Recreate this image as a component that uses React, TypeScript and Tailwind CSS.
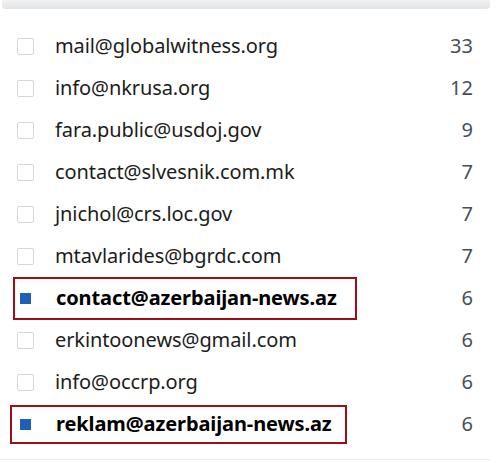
import React from 'react'

const senders = [
  { email: 'mail@globalwitness.org', count: 33 },
  { email: 'info@nkrusa.org', count: 12 },
  { email: 'fara.public@usdoj.gov', count: 9 },
  { email: 'contact@slvesnik.com.mk', count: 7 },
  { email: 'jnichol@crs.loc.gov', count: 7 },
  { email: 'mtavlarides@bgrdc.com', count: 7 },
  { email: 'contact@azerbaijan-news.az', count: 6, checked: true, box: 'left-[13px] right-[133px] top-[0px] bottom-[-1px]' },
  { email: 'erkintoonews@gmail.com', count: 6 },
  { email: 'info@occrp.org', count: 6 },
  { email: 'reklam@azerbaijan-news.az', count: 6, checked: true, box: 'left-[10px] right-[143px] top-[2px] bottom-[1px]' },
]

export default function App() {
  return (
    <div className="w-[504px] h-[463px] bg-white overflow-hidden" style={{ fontFamily: '"Noto Sans", "Open Sans", sans-serif' }}>
      <div className="w-[488px] ml-[2px] h-[9px] bg-gradient-to-b from-[#f1f2f3] to-[#e2e3e5] rounded-b-sm" />
      <ul className="w-[490px] mt-[16px] pb-[14px] border-b border-[#ececec]">
        {senders.map((s) => (
          <li key={s.email} className="relative h-[42px] flex items-center">
            {s.checked ? (
              <span className="ml-[20px] mr-[25px] size-[11px] bg-[#1f5fb4]" />
            ) : (
              <span className="ml-[17px] mr-[21px] size-[17px] border-[1.5px] border-[#d6d6d6] rounded-[2px]" />
            )}
            <span className={`flex-1 text-[20px] tracking-[-0.1px] ${s.checked ? 'font-bold text-black' : 'text-[#1c1c1c]'}`}>{s.email}</span>
            <span className="w-[40px] mr-[17px] text-right text-[20px] text-[#474f59]">{s.count}</span>
            {s.box && <div className={`absolute border-[2.5px] border-[#a00d16] ${s.box}`} />}
          </li>
        ))}
      </ul>
    </div>
  )
}
